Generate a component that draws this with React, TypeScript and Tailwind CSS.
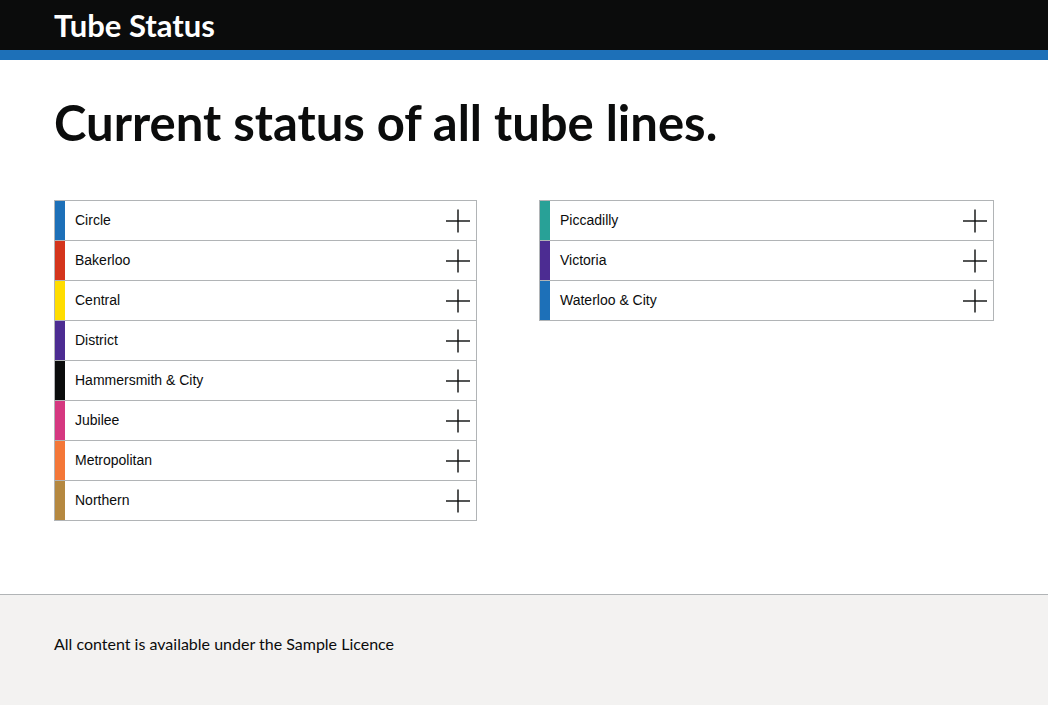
type Line = { name: string; color: string };

const leftLines: Line[] = [
  { name: "Circle", color: "bg-[#1d70b8]" },
  { name: "Bakerloo", color: "bg-[#d4351c]" },
  { name: "Central", color: "bg-[#ffdd00]" },
  { name: "District", color: "bg-[#4c2c92]" },
  { name: "Hammersmith & City", color: "bg-[#0b0c0c]" },
  { name: "Jubilee", color: "bg-[#d53880]" },
  { name: "Metropolitan", color: "bg-[#f47738]" },
  { name: "Northern", color: "bg-[#b58840]" },
];

const rightLines: Line[] = [
  { name: "Piccadilly", color: "bg-[#28a197]" },
  { name: "Victoria", color: "bg-[#4c2c92]" },
  { name: "Waterloo & City", color: "bg-[#1d70b8]" },
];

function PlusIcon() {
  return (
    <svg width="24" height="24" viewBox="0 0 24 24" stroke="#0b0c0c" strokeWidth="1.4" fill="none">
      <line x1="0" y1="12" x2="24" y2="12" />
      <line x1="12" y1="0.5" x2="12" y2="23.5" />
    </svg>
  );
}

function LineList({ lines, width }: { lines: Line[]; width: string }) {
  return (
    <ul className={`${width} border-x border-t border-[#b1b4b6]`}>
      {lines.map((line) => (
        <li key={line.name} className="flex h-[40px] border-b border-[#b1b4b6]">
          <span className={`w-[10px] shrink-0 ${line.color}`} />
          <span className="flex-1 pl-[10px] flex items-center text-[14px] text-[#0b0c0c] font-['Liberation_Sans',Arial,sans-serif]">
            {line.name}
          </span>
          <button className="flex items-center mr-[6px]">
            <PlusIcon />
          </button>
        </li>
      ))}
    </ul>
  );
}

export default function App() {
  return (
    <div className="min-h-[726px] bg-white font-['Lato',sans-serif] text-[#0b0c0c]">
      <header className="bg-[#0b0c0c] border-b-[10px] border-[#1d70b8]">
        <div className="h-[50px] px-[54px] flex items-center">
          <span className="text-white font-bold text-[31px] leading-none">Tube Status</span>
        </div>
      </header>

      <main className="px-[54px] pt-[38px] pb-[73px]">
        <h1 className="text-[49px] font-bold leading-none mb-[53px]">
          Current status of all tube lines.
        </h1>
        <div className="flex gap-[62px] items-start">
          <LineList lines={leftLines} width="w-[423px]" />
          <LineList lines={rightLines} width="w-[455px]" />
        </div>
      </main>

      <footer className="bg-[#f3f2f1] border-t border-[#b1b4b6] h-[111px] px-[54px] pt-[39px]">
        <p className="text-[16px] leading-[20px]">All content is available under the Sample Licence</p>
      </footer>
    </div>
  );
}
